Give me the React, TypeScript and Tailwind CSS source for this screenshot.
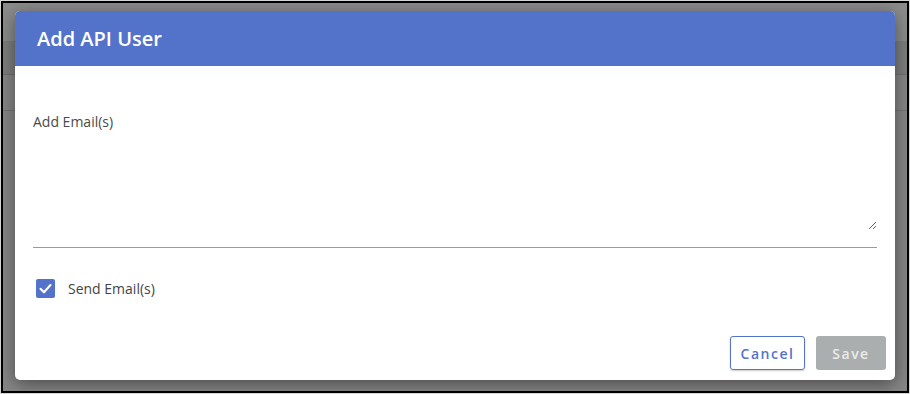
import { useState } from "react";

const font = { fontFamily: '"Open Sans", "Noto Sans", sans-serif' };

export default function App() {
  const [sendEmail, setSendEmail] = useState(true);

  return (
    <div className="w-[910px] h-[394px] bg-[#d6d6d6] p-px" style={font}>
      <div className="relative h-full border-2 border-black bg-[#868686] overflow-hidden">
        {/* page behind the backdrop */}
        <div className="h-[38px] bg-[#8c8c8c]" />
        <div className="h-[34px] bg-[#7e7e7e] border-b border-[#6f6f6f]" />
        <div className="h-[36px] border-b border-[#757575]" />

        {/* modal */}
        <div className="absolute left-[12px] top-[8px] w-[880px] bg-white rounded-[5px] overflow-hidden shadow-[0_4px_18px_rgba(0,0,0,0.45)]">
          <div className="h-[55px] bg-[#5373cb] px-[22px] flex items-center">
            <h2 className="text-white text-[20px] font-semibold">Add API User</h2>
          </div>

          <div className="px-[18px] pt-[40px]">
            <div className="border-b border-[#9a9a9a] pb-[17px]">
              <textarea
                className="block w-full h-[124px] resize-y border-0 outline-none p-0 pt-[5px] text-[14px] text-[#333] placeholder:text-[#4a4a4a]"
                placeholder="Add Email(s)"
              />
            </div>

            <label className="mt-[30px] flex items-center gap-[13px] pl-[3px] cursor-pointer">
              <span
                className={`w-[19px] h-[19px] rounded-[2px] flex items-center justify-center ${sendEmail ? "bg-[#5373cb]" : "border border-[#999]"}`}
                onClick={() => setSendEmail(!sendEmail)}
              >
                {sendEmail && (
                  <svg width="15" height="15" viewBox="0 0 24 24" fill="none" stroke="white" strokeWidth="3.4" strokeLinecap="round" strokeLinejoin="round">
                    <polyline points="4 12.5 9.5 18 20 6.5" />
                  </svg>
                )}
              </span>
              <span className="text-[14px] text-[#444]">Send Email(s)</span>
            </label>
          </div>

          <div className="mt-[37px] pb-[10px] pr-[9px] flex justify-end gap-[11px]">
            <button className="w-[75px] h-[34px] rounded-[3px] border border-[#5373cb] text-[#5373cb] text-[14px] font-semibold tracking-[1.5px] shadow-[0_1px_2px_rgba(0,0,0,0.2)]">
              Cancel
            </button>
            <button className="w-[70px] h-[34px] rounded-[3px] bg-[#aaaeae] text-[#ebebeb] text-[14px] font-semibold tracking-[1.5px]">
              Save
            </button>
          </div>
        </div>
      </div>
    </div>
  );
}
